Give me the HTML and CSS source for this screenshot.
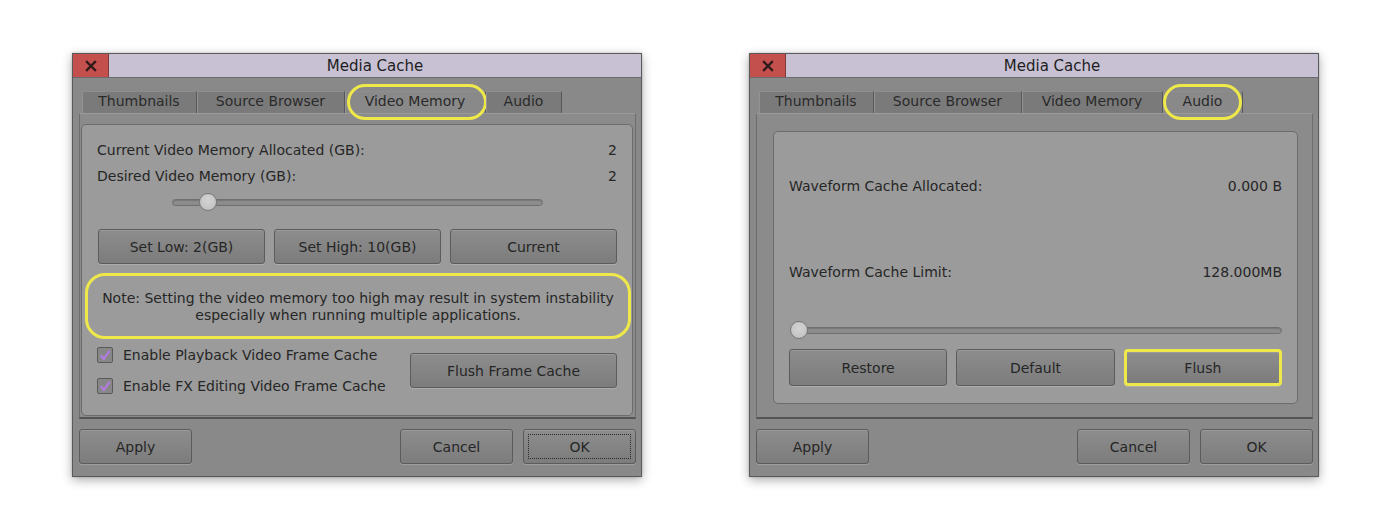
FILE: index.html
```html
<!DOCTYPE html>
<html>
<head>
<meta charset="utf-8">
<title>Media Cache</title>
<link rel="stylesheet" href="styles.css">
</head>
<body>
<main class="stage">
  <section class="dialog">
    <header class="titlebar">
      <div class="close"><svg width="12" height="12" viewBox="0 0 12 12"><path d="M2 2 L10 10 M10 2 L2 10" stroke="#2f1a1a" stroke-width="2.4" stroke-linecap="square"/></svg></div>
      <div class="title">Media Cache</div>
    </header>
    <nav class="tabs">
      <div class="tab t-thumb">Thumbnails</div>
      <div class="tab t-src">Source Browser</div>
      <div class="tab t-vid active hl">Video Memory</div>
      <div class="tab t-aud">Audio</div>
    </nav>
    <div class="pane pane-video">
      <div class="panel panel-video">
        <div class="row r1"><span>Current Video Memory Allocated (GB):</span><span>2</span></div>
        <div class="row r2"><span>Desired Video Memory (GB):</span><span>2</span></div>
        <div class="slider slider-video"><div class="track"><div class="knob" style="left: 26px"></div></div></div>
        <div class="btnrow btnrow-video">
          <button class="btn">Set Low: 2(GB)</button>
          <button class="btn">Set High: 10(GB)</button>
          <button class="btn">Current</button>
        </div>
        <div class="note">
          <p>Note: Setting the video memory too high may result in system instability</p>
          <p>especially when running multiple applications.</p>
        </div>
        <div class="checks">
          <div class="checklist">
            <label class="check"><span class="box"><svg width="14" height="14" viewBox="0 0 14 14"><path d="M2.8 7.2 L5.8 11 L11.6 2.8" fill="none" stroke="#b27be0" stroke-width="2.2"/></svg></span>Enable Playback Video Frame Cache</label>
            <label class="check"><span class="box"><svg width="14" height="14" viewBox="0 0 14 14"><path d="M2.8 7.2 L5.8 11 L11.6 2.8" fill="none" stroke="#b27be0" stroke-width="2.2"/></svg></span>Enable FX Editing Video Frame Cache</label>
          </div>
          <button class="btn flushframe">Flush Frame Cache</button>
        </div>
      </div>
    </div>
    <footer class="footer">
      <button class="btn fbtn">Apply</button>
      <div class="spacer"></div>
      <button class="btn fbtn">Cancel</button>
      <button class="btn fbtn focus">OK</button>
    </footer>
  </section>

  <section class="dialog">
    <header class="titlebar">
      <div class="close"><svg width="12" height="12" viewBox="0 0 12 12"><path d="M2 2 L10 10 M10 2 L2 10" stroke="#2f1a1a" stroke-width="2.4" stroke-linecap="square"/></svg></div>
      <div class="title">Media Cache</div>
    </header>
    <nav class="tabs">
      <div class="tab t-thumb">Thumbnails</div>
      <div class="tab t-src">Source Browser</div>
      <div class="tab t-vid">Video Memory</div>
      <div class="tab t-aud2 active hl">Audio</div>
    </nav>
    <div class="pane pane-audio">
      <div class="panel panel-audio">
        <div class="row a1"><span>Waveform Cache Allocated:</span><span>0.000 B</span></div>
        <div class="row a2"><span>Waveform Cache Limit:</span><span>128.000MB</span></div>
        <div class="slider slider-audio"><div class="track"><div class="knob" style="left: -2px"></div></div></div>
        <div class="btnrow btnrow-audio">
          <button class="btn">Restore</button>
          <button class="btn">Default</button>
          <button class="btn flushhl">Flush</button>
        </div>
      </div>
    </div>
    <footer class="footer">
      <button class="btn fbtn">Apply</button>
      <div class="spacer"></div>
      <button class="btn fbtn">Cancel</button>
      <button class="btn fbtn">OK</button>
    </footer>
  </section>
</main>
</body>
</html>
```

FILE: styles.css
```css
* { box-sizing: border-box; }
html, body { margin: 0; padding: 0; background: #ffffff; }
body {
  font-family: "DejaVu Sans", "Liberation Sans", sans-serif;
  font-size: 14px;
  color: #262626;
  width: 1400px;
  height: 516px;
  overflow: hidden;
}
.stage {
  display: flex;
  gap: 107px;
  padding: 53px 0 0 72px;
}
.dialog {
  width: 570px;
  height: 424px;
  background: #898989;
  border: 1px solid #5a5a5a;
  box-shadow: 0 3px 10px rgba(0,0,0,0.33), 0 0 2px rgba(0,0,0,0.2);
  display: flex;
  flex-direction: column;
}
.titlebar {
  height: 24px;
  display: flex;
  background: #c8c1d3;
  border-bottom: 1px solid #6c6a70;
  flex: none;
}
.close {
  width: 36px;
  background: #c4504e;
  border-right: 1px solid #7c3a3a;
  display: flex;
  align-items: center;
  justify-content: center;
}
.title {
  flex: 1;
  text-align: center;
  font-size: 15px;
  line-height: 25px;
  color: #1e1e1e;
}
.tabs {
  display: flex;
  margin-top: 13px;
  height: 22px;
  padding-left: 9px;
  flex: none;
}
.tab {
  position: relative;
  height: 22px;
  line-height: 19px;
  text-align: center;
  background: #7a7a7a;
  border-top: 1px solid #8e8e8e;
  border-right: 1px solid #585858;
  box-shadow: inset 1px 0 0 #939393;
  color: #2a2a2a;
}
.tab.active {
  background: #898989;
}
.t-thumb { width: 115px; }
.t-src { width: 148px; }
.t-vid { width: 141px; }
.t-aud { width: 76px; }
.t-aud2 { width: 80px; }
.tab.hl::after {
  content: "";
  position: absolute;
  left: 2px;
  right: -2px;
  top: -8px;
  bottom: -7px;
  border: 3px solid #efe84a;
  border-radius: 18px;
}
.t-aud2.hl::after { left: 0; right: 0; }
.pane {
  height: 306px;
  margin: 0 5px 0 6px;
  background: #8b8b8b;
  border: 1px solid #6d6d6d;
  border-top-color: #9a9a9a;
  border-bottom: 2px solid #555555;
  flex: none;
  display: flex;
}
.pane-video { padding: 10px 2px 1px 1px; }
.pane-audio { padding: 17px 15px 13px 16px; }
.panel {
  flex: 1;
  background: #9b9b9b;
  border: 1px solid #6c6c6c;
  border-radius: 5px;
  padding: 0 15px;
  display: flex;
  flex-direction: column;
}
.row {
  display: flex;
  justify-content: space-between;
  height: 20px;
  line-height: 20px;
}
.r1 { margin-top: 15px; }
.r2 { margin-top: 6px; }
.slider {
  height: 18px;
  display: flex;
  align-items: center;
}
.track {
  position: relative;
  height: 7px;
  background: #8c8c8c;
  border: 1px solid #6f6f6f;
  border-radius: 4px;
  box-shadow: inset 0 1px 1px rgba(0,0,0,0.15);
}
.knob {
  position: absolute;
  top: -7px;
  width: 18px;
  height: 18px;
  border-radius: 50%;
  background: radial-gradient(circle at 50% 40%, #d4d4d4, #bdbdbd);
  border: 1px solid #777777;
}
.slider-video { margin-top: 7px; padding-left: 75px; }
.slider-video .track { width: 371px; }
.slider-audio { margin-top: 39px; padding-left: 2px; }
.slider-audio .track { width: 491px; }
.btn {
  font-family: inherit;
  font-size: 14px;
  color: #262626;
  background: linear-gradient(#8d8d8d, #7c7c7c);
  border: 1px solid #5c5c5c;
  border-radius: 3px;
  box-shadow: inset 0 1px 0 rgba(255,255,255,0.12), 0 1px 0 rgba(255,255,255,0.18);
  padding: 0;
  height: 35px;
}
.btnrow {
  display: grid;
  grid-template-columns: 1fr 1fr 1fr;
  gap: 9px;
}
.btnrow-video { margin-top: 18px; padding-left: 1px; }
.btnrow-audio { margin-top: 10px; }
.btnrow-audio .btn { height: 37px; }
.flushhl {
  border: 3px solid #efe84a;
  border-radius: 4px;
}
.note {
  margin: 9px -14px 0 -12px;
  height: 66px;
  border: 3px solid #efe84a;
  border-radius: 20px;
  display: flex;
  flex-direction: column;
  justify-content: center;
  align-items: center;
  padding-top: 1px;
}
.note p {
  margin: 0;
  line-height: 17px;
}
.checks {
  display: flex;
  align-items: center;
  justify-content: space-between;
  margin-top: 6px;
}
.checklist {
  display: flex;
  flex-direction: column;
  gap: 11px;
}
.check {
  display: flex;
  align-items: center;
  gap: 10px;
  height: 20px;
}
.box {
  width: 16px;
  height: 16px;
  border: 1px solid #5a5a5a;
  border-radius: 2px;
  background: #878787;
  display: flex;
  align-items: center;
  justify-content: center;
}
.flushframe { width: 207px; }
.a1 { margin-top: 44px; }
.a2 { margin-top: 66px; }
.footer {
  flex: 1;
  display: flex;
  gap: 10px;
  padding: 10px 5px 0 6px;
  align-items: flex-start;
}
.spacer { flex: 1; }
.fbtn { width: 113px; }
.focus {
  outline: 1px dotted #2a2a2a;
  outline-offset: -6px;
}
```
